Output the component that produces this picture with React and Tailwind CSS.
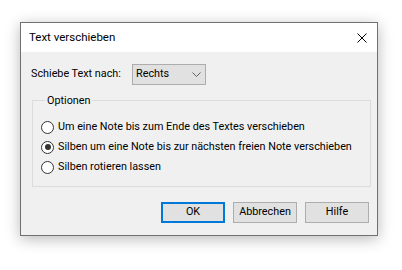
import { useState } from "react";

function Radio({ checked, onClick, children }) {
    return (
        <label className="flex h-[20px] items-center cursor-default" onClick={onClick}>
            <span className="flex h-[13px] w-[13px] items-center justify-center rounded-full border border-[#333333] bg-white">
                {checked && <span className="h-[6px] w-[6px] rounded-full bg-[#333333]" />}
            </span>
            <span className="ml-[4px]">{children}</span>
        </label>
    );
}

function Button({ children, primary }) {
    return (
        <button
            className={
                primary
                    ? "h-[21px] w-[64px] border-2 border-[#0078d7] bg-[#e1e1e1] leading-none"
                    : "h-[21px] w-[64px] border border-[#adadad] bg-[#e1e1e1] leading-none"
            }
        >
            {children}
        </button>
    );
}

export default function App() {
    const [option, setOption] = useState(1);
    const options = [
        "Um eine Note bis zum Ende des Textes verschieben",
        "Silben um eine Note bis zur nächsten freien Note verschieben",
        "Silben rotieren lassen",
    ];

    return (
        <div className="h-[270px] w-[402px] bg-white pl-[20px] pt-[22px] font-['Roboto',sans-serif] text-[10.8px] text-black">
            <div className="flex h-[214px] w-[358px] flex-col border border-[#707070] bg-[#f0f0f0] shadow-[0_3px_14px_rgba(0,0,0,0.28)]">
                {/* title bar */}
                <div className="flex h-[29px] items-center justify-between bg-white pl-[8px] pr-[10px]">
                    <span className="text-[11.5px]">Text verschieben</span>
                    <svg width="10" height="10" viewBox="0 0 10 10" className="mt-[1px]">
                        <path d="M0.5 0.5 L9.5 9.5 M9.5 0.5 L0.5 9.5" stroke="#000" strokeWidth="1" fill="none" />
                    </svg>
                </div>

                <div className="flex flex-1 flex-col">
                    <div className="mt-[12px] flex h-[21px] items-center pl-[10px]">
                        <span className="w-[101px]">Schiebe Text nach:</span>
                        <div className="flex h-[21px] w-[74px] items-center justify-between border border-[#adadad] bg-[#e1e1e1] pl-[3px] pr-[4px]">
                            <span>Rechts</span>
                            <svg width="9" height="5" viewBox="0 0 9 5">
                                <path d="M0.5 0.5 L4.5 4.5 L8.5 0.5" stroke="#606060" strokeWidth="1" fill="none" />
                            </svg>
                        </div>
                    </div>

                    <fieldset className="ml-[11px] mt-[8px] w-[339px] border border-[#dcdcdc] pb-[9px] pl-[8px] pt-[9px]">
                        <legend className="ml-[4px] px-[2px] leading-[15px]">Optionen</legend>
                        {options.map((text, i) => (
                            <Radio key={i} checked={option === i} onClick={() => setOption(i)}>
                                {text}
                            </Radio>
                        ))}
                    </fieldset>

                    <div className="mt-auto mb-[12px] flex justify-end gap-[8px] pr-[8px]">
                        <Button primary>OK</Button>
                        <Button>Abbrechen</Button>
                        <Button>Hilfe</Button>
                    </div>
                </div>
            </div>
        </div>
    );
}
